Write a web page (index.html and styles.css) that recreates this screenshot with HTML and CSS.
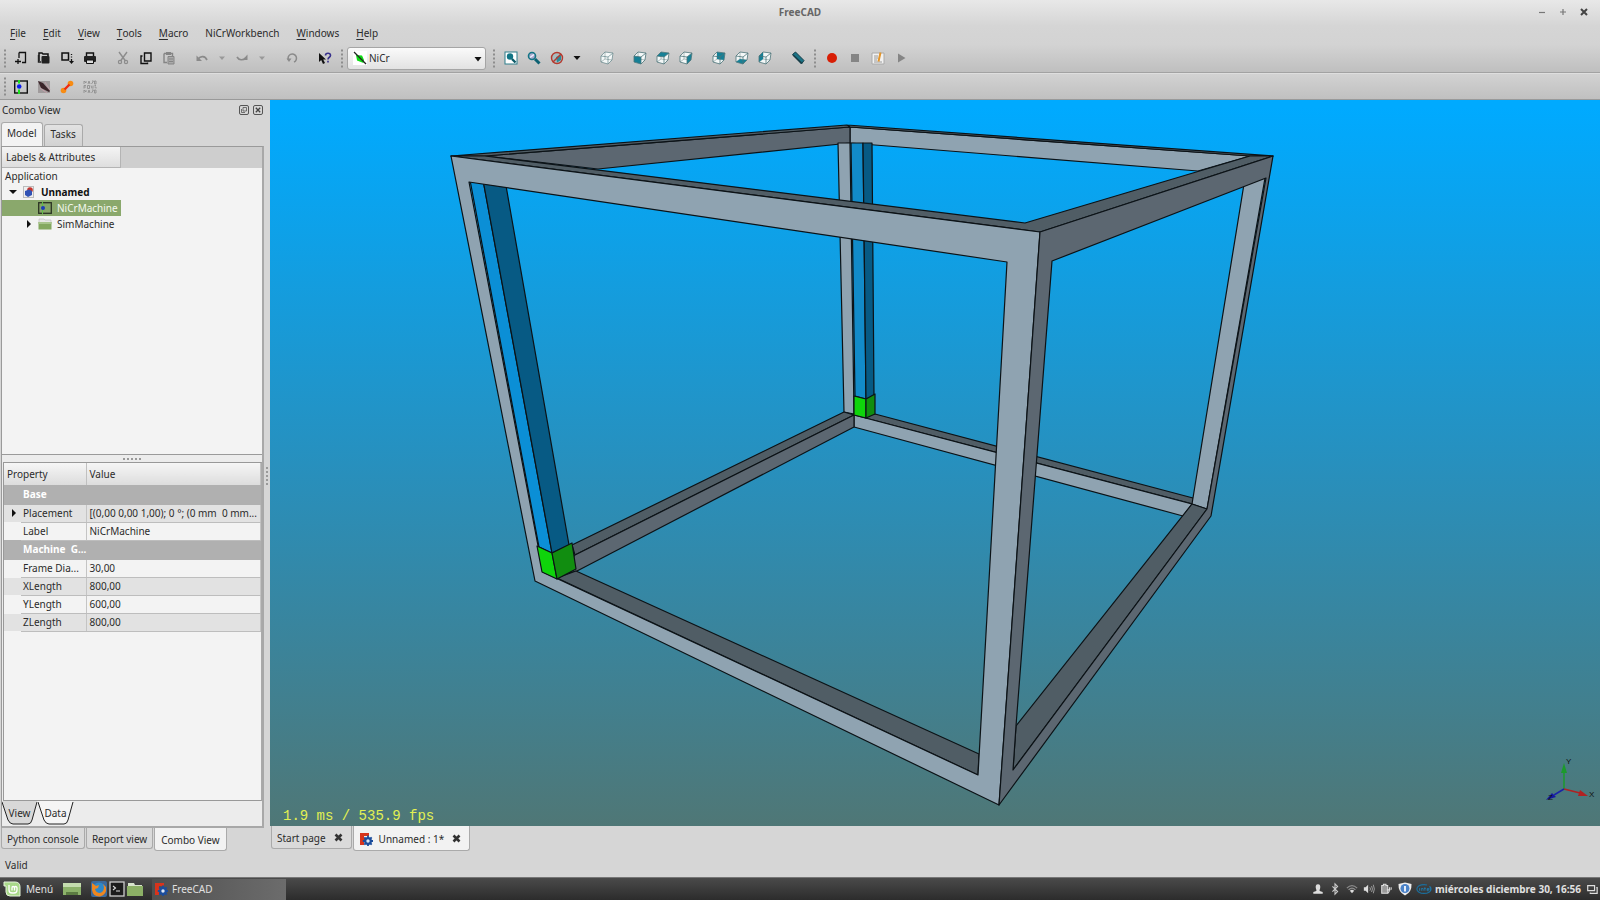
FILE: index.html
```html
<!DOCTYPE html>
<html lang="en">
<head>
<meta charset="utf-8">
<title>FreeCAD</title>
<link rel="stylesheet" href="styles.css">
</head>
<body>
<svg class="defs" aria-hidden="true">
  <symbol id="cube" viewBox="0 0 14 14">
    <path d="M1 5L5 1L13 2L12 9L8 13L1 11Z" fill="#f4f8f8"/>
    <path d="M5 1L5 8L1 11M5 8L12 9" fill="none" stroke="#8fa3a5" stroke-width=".7"/>
  </symbol>
  <symbol id="edges" viewBox="0 0 14 14">
    <path d="M1 5L5 1L13 2L12 9L8 13L1 11ZM1 5L8 6L8 13M8 6L13 2" fill="none" stroke="#4d7378" stroke-width=".8"/>
  </symbol>
  <symbol id="freecad" viewBox="0 0 14 14">
    <path d="M1 1H10V4H5V6H8V8H5V13H1Z" fill="#d8341c"/>
    <path d="M9 3.500V14M3.800 9H14M5.300 5.300L12.700 12.700M12.700 5.300L5.300 12.700" stroke="#1c4d9c" stroke-width="1.800"/>
    <circle cx="9" cy="9" r="2.800" fill="#dfe7f2" stroke="#1c4d9c" stroke-width="2.200"/>
  </symbol>
</svg>

<header class="chrome">
  <div class="titlebar">
    <span></span>
    <h1 class="title">FreeCAD</h1>
    <div class="winbtns">
      <button aria-label="Minimize"><svg width="8" height="8" viewBox="0 0 8 8"><path d="M1 4.5H7" stroke="#777" stroke-width="1.2"/></svg></button>
      <button aria-label="Maximize"><svg width="8" height="8" viewBox="0 0 8 8"><path d="M1 4H7M4 1V7" stroke="#777" stroke-width="1.2"/></svg></button>
      <button aria-label="Close"><svg width="8" height="8" viewBox="0 0 8 8"><path d="M1 1L7 7M7 1L1 7" stroke="#444" stroke-width="2"/></svg></button>
    </div>
  </div>
  <nav class="menubar">
    <button><u>F</u>ile</button><button><u>E</u>dit</button><button><u>V</u>iew</button><button><u>T</u>ools</button><button><u>M</u>acro</button><button>NiCrWorkbench</button><button><u>W</u>indows</button><button><u>H</u>elp</button>
  </nav>
  <div class="toolbar main-tools">
    <i class="grip first"></i>
    <button aria-label="New"><svg viewBox="0 0 14 14"><path d="M5 1.5H11.5V11.5H8M5 1.5V7M4 8V13M1 10.5H7" fill="none" stroke="#111" stroke-width="1.3"/></svg></button>
    <button aria-label="Open"><svg viewBox="0 0 14 14"><path d="M2 10V2H5L6 3H11V5" fill="none" stroke="#111" stroke-width="1.5"/><rect x="4.5" y="5" width="8" height="7.5" rx="1" fill="#222"/><path d="M1.5 4V11H4" stroke="#222" fill="none" stroke-width="1.4"/></svg></button>
    <button aria-label="Save"><svg viewBox="0 0 14 14"><path d="M2 2H8.500V9H2Z" fill="none" stroke="#111" stroke-width="1.500"/><path d="M11.500 3V4M11.500 5.500V6.500M11.500 8V10" stroke="#111" stroke-width="1.300"/><path d="M9 10H14L11.500 13Z" fill="#111"/></svg></button>
    <button aria-label="Print"><svg viewBox="0 0 14 14"><path d="M3.5 5V2H10.5V5" fill="none" stroke="#111" stroke-width="1.4"/><rect x="1" y="5" width="12" height="6" rx="1" fill="#222"/><path d="M3.5 9H10.5V12.5H3.5Z" fill="#ddd" stroke="#111"/></svg></button>
    <i class="sep"></i>
    <button aria-label="Cut" disabled><svg viewBox="0 0 14 14"><path d="M3 1L9.5 10M11 1L4.5 10" stroke="#8c8c8c" stroke-width="1.4"/><circle cx="4" cy="11" r="1.6" fill="none" stroke="#8c8c8c" stroke-width="1.2"/><circle cx="10" cy="11" r="1.6" fill="none" stroke="#8c8c8c" stroke-width="1.2"/></svg></button>
    <button aria-label="Copy"><svg viewBox="0 0 14 14"><path d="M5.5 2H12V10H5.5ZM3.5 5H2V12.5H8.5V11.5" fill="none" stroke="#111" stroke-width="1.4"/></svg></button>
    <button aria-label="Paste" disabled><svg viewBox="0 0 14 14"><path d="M2 2.5H10.5V5M2 2.5V11.5H5" fill="none" stroke="#858585" stroke-width="1.4"/><rect x="4" y="1" width="5" height="3" fill="#858585"/><path d="M6 5.5H12V13H6ZM7 8H11M7 10.500H11" fill="#aaa" stroke="#858585"/></svg></button>
    <i class="sep"></i>
    <button aria-label="Undo" disabled><svg viewBox="0 0 14 14"><path d="M3 8C6 4.500 10 5 12 9" fill="none" stroke="#8a8a8a" stroke-width="1.700"/><path d="M1.500 4.500V10H7Z" fill="#8a8a8a"/></svg></button>
    <button class="drop" aria-label="Undo list" disabled><svg viewBox="0 0 8 8"><path d="M1 2.500H7L4 6Z" fill="#999"/></svg></button>
    <button aria-label="Redo" disabled><svg viewBox="0 0 14 14"><path d="M2 6C4 9.500 8 9.500 11 7" fill="none" stroke="#8a8a8a" stroke-width="1.700"/><path d="M12.500 3.500V9H7.500Z" fill="#8a8a8a"/></svg></button>
    <button class="drop" aria-label="Redo list" disabled><svg viewBox="0 0 8 8"><path d="M1 2.500H7L4 6Z" fill="#999"/></svg></button>
    <i class="sep"></i>
    <button aria-label="Refresh" disabled><svg viewBox="0 0 14 14"><path d="M3.500 9A4.200 4.200 0 1 1 9 11" fill="none" stroke="#8a8a8a" stroke-width="1.500"/><path d="M1.500 7.500H6.500L4 11Z" fill="#8a8a8a"/></svg></button>
    <i class="sep"></i>
    <button aria-label="What's this"><svg viewBox="0 0 14 14"><path d="M1 2L1 11L3.200 9L5 13L7 12L5.200 8.500H8Z" fill="#111"/><path d="M7.500 4.500C7.500 1.500 12.500 1.500 12.500 4.500C12.500 6.500 10 6 10 8.500M10 9.800V11.500" fill="none" stroke="#37308c" stroke-width="1.600"/></svg></button>
    <i class="grip"></i>
    <div class="workbench">
      <svg width="14" height="14" viewBox="0 0 14 14"><rect width="14" height="14" fill="#fff"/><path d="M3 4L9 4.500L11 9L10.500 12L4 9.500Z" fill="#0bdc12"/><path d="M1 1L13 13" stroke="#222" stroke-width="1.300"/></svg>
      <select aria-label="Workbench"><option>NiCr</option></select>
      <svg class="caret" width="8" height="8" viewBox="0 0 8 8"><path d="M.5 2H7.500L4 6.500Z" fill="#111"/></svg>
    </div>
    <i class="grip"></i>
    <button aria-label="Fit all"><svg viewBox="0 0 14 14"><rect x="1" y="1" width="12" height="12" fill="#fff" stroke="#2f7f8c"/><circle cx="6" cy="5.500" r="3.200" fill="#127585"/><path d="M8 8L11.500 11.500" stroke="#0d5a68" stroke-width="2.400"/></svg></button>
    <button aria-label="Fit selection"><svg viewBox="0 0 14 14"><circle cx="5" cy="5" r="3.500" fill="#aac" stroke="#127585" stroke-width="1.600"/><path d="M3 6.500L7 3.500" stroke="#eef" stroke-width="1.500"/><path d="M8 8L12.500 12.500" stroke="#0d6273" stroke-width="3"/></svg></button>
    <button aria-label="Draw style"><svg viewBox="0 0 14 14"><circle cx="7" cy="7" r="5.500" fill="#a9bdc0" stroke="#b5392e" stroke-width="1.400"/><path d="M6 6L11 4V9L7 11.500Z" fill="#2a8b99"/><path d="M11 3L3 11" stroke="#b5392e" stroke-width="1.500"/></svg></button>
    <button class="drop" aria-label="Draw style list"><svg viewBox="0 0 8 8"><path d="M.5 2H7.500L4 6Z" fill="#111"/></svg></button>
    <i class="sep"></i>
    <button aria-label="Axonometric"><svg viewBox="0 0 14 14"><use href="#cube"/><use href="#edges" opacity=".75"/></svg></button>
    <i class="sep"></i>
    <button aria-label="Front"><svg viewBox="0 0 14 14"><use href="#cube"/><path d="M1 5L8 6V13L1 11Z" fill="#168096"/><use href="#edges"/></svg></button>
    <button aria-label="Top"><svg viewBox="0 0 14 14"><use href="#cube"/><path d="M1 5L5 1L13 2L8 6Z" fill="#168096"/><use href="#edges"/></svg></button>
    <button aria-label="Right"><svg viewBox="0 0 14 14"><use href="#cube"/><path d="M8 6L13 2L12 9L8 13Z" fill="#168096"/><use href="#edges"/></svg></button>
    <i class="sep"></i>
    <button aria-label="Rear"><svg viewBox="0 0 14 14"><use href="#cube"/><path d="M5 1L13 2L12 9L5 8Z" fill="#168096"/><use href="#edges"/></svg></button>
    <button aria-label="Bottom"><svg viewBox="0 0 14 14"><use href="#cube"/><path d="M1 11L5 8L12 9L8 13Z" fill="#168096"/><use href="#edges"/></svg></button>
    <button aria-label="Left"><svg viewBox="0 0 14 14"><use href="#cube"/><path d="M1 5L5 1V8L1 11Z" fill="#168096"/><use href="#edges"/></svg></button>
    <i class="sep"></i>
    <button aria-label="Measure"><svg viewBox="0 0 14 14"><path d="M1.500 3.500L4.500 1L13 9.500L10.500 13Z" fill="#1b7386" stroke="#173c46"/><path d="M2 4L10.500 12" stroke="#173c46" stroke-width="1.600"/></svg></button>
    <i class="grip"></i>
    <button aria-label="Record macro"><svg viewBox="0 0 14 14"><circle cx="7" cy="7" r="5" fill="#d81e05"/></svg></button>
    <button aria-label="Stop macro" disabled><svg viewBox="0 0 14 14"><rect x="3" y="3" width="8" height="8" fill="#858585"/></svg></button>
    <button aria-label="Macros"><svg viewBox="0 0 14 14"><path d="M1 2H13V13H1Z" fill="#f1f1f1" stroke="#aaa"/><path d="M3 5H7M3 7H7M3 9H6M3 11H11" stroke="#9a9a9a"/><path d="M9.500 1.500L7.500 10.500" stroke="#e3952a" stroke-width="2"/></svg></button>
    <button aria-label="Run macro" disabled><svg viewBox="0 0 14 14"><path d="M4 2.500L11.500 7L4 11.500Z" fill="#858585"/></svg></button>
  </div>
</header>
<div class="toolbar nicr-tools">
  <i class="grip first"></i>
  <button aria-label="Machine"><svg viewBox="0 0 14 14"><rect x=".7" y="1" width="12.600" height="12" fill="none" stroke="#111" stroke-width="1.400"/><path d="M5 0V3.500M5 9.500V14" stroke="#19e01d" stroke-width="2"/><circle cx="5.200" cy="6.500" r="2.300" fill="#0a1cf0"/></svg></button>
  <button aria-label="Wire"><svg viewBox="0 0 14 14"><rect x="1" y="1" width="12" height="12" fill="#a09b9c"/><path d="M1 1L6 3L13 11L12 12L4 8Z" fill="#3b2429"/><path d="M3 8L10 13M8 2L13 10" stroke="#c4a0a9"/></svg></button>
  <button aria-label="Path"><svg viewBox="0 0 14 14"><circle cx="3.500" cy="10.500" r="2.800" fill="#f78c14"/><circle cx="10.500" cy="3.500" r="2.800" fill="#f78c14"/><path d="M4.500 9.500L9.500 4.500" stroke="#ee2b12" stroke-width="2.400"/></svg></button>
  <button aria-label="Code" disabled><svg viewBox="0 0 14 14"><g fill="none" stroke="#909090" stroke-width=".9"><path d="M1 4V1L3 3V1M5 4L6 1L7 4M9 1H10.500L8.500 4M11.500 1V4H13V1Z"/><path d="M1 8.500V5.500H3M1 7H3M4.500 5.500H6.500V8.500H4.500ZM8 5.500L9 8.500M10 5.500V8.500M11.500 5.500H13M11.500 7H13V8.500"/><path d="M1 13V10L3 12V10M5 13L6 10L7 13M9 10H10.500L8.500 13M11.500 10V13H13V10Z"/></g></svg></button>
</div>

<main class="workspace">
  <aside class="dock">
    <div class="dock-title">
      <h2>Combo View</h2>
      <button aria-label="Float"><svg width="10" height="10" viewBox="0 0 10 10"><rect x=".5" y=".5" width="9" height="9" rx="1.500" fill="none" stroke="#555"/><path d="M4 2.500H7.500V6H4ZM2.500 4V7.500H6" fill="none" stroke="#555" stroke-width=".8"/></svg></button>
      <button aria-label="Close"><svg width="10" height="10" viewBox="0 0 10 10"><rect x=".5" y=".5" width="9" height="9" rx="1.500" fill="none" stroke="#555"/><path d="M2.800 2.800L7.200 7.200M7.200 2.800L2.800 7.200" stroke="#444" stroke-width="1.300"/></svg></button>
    </div>
    <div class="tabs-top"><button class="on">Model</button><button>Tasks</button></div>
    <div class="dock-body">
      <section class="tree">
        <div class="tree-head"><span>Labels &amp; Attributes</span></div>
        <ul>
          <li class="row root">Application</li>
          <li class="row doc"><svg width="8" height="8" viewBox="0 0 8 8"><path d="M0 2H8L4 6Z" fill="#111"/></svg><svg width="12" height="12" viewBox="0 0 12 12"><rect x=".5" y=".5" width="10" height="11" fill="#eee" stroke="#bbb"/><circle cx="7" cy="4" r="2.800" fill="#c6342c"/><path d="M2 5L6 3.500L9 5V9L5 11L2 9Z" fill="#3152b4"/></svg><b>Unnamed</b></li>
          <li class="row item selected"><svg width="14" height="12" viewBox="0 0 14 12"><rect x=".7" y=".7" width="12.600" height="10.600" fill="#86a468" stroke="#2b3324" stroke-width="1.300"/><path d="M4.500 0V12" stroke="#5fbf44"/><circle cx="5" cy="6" r="2" fill="#1c3cb8"/></svg><span>NiCrMachine</span></li>
          <li class="row item"><svg class="twist" width="8" height="8" viewBox="0 0 8 8"><path d="M2 0V8L6 4Z" fill="#111"/></svg><svg width="14" height="12" viewBox="0 0 14 12"><path d="M1 1H6L7 2H13V5H1Z" fill="#e8e8e8" stroke="#bbb" stroke-width=".6"/><rect x=".5" y="4" width="13" height="7.500" fill="#84a860"/><path d="M.5 4H13.500V6H.5Z" fill="#a8c48c"/></svg><span>SimMachine</span></li>
        </ul>
      </section>
      <div class="splitter"></div>
      <section class="props">
        <table>
          <colgroup><col class="c-arrow"><col class="c-name"><col></colgroup>
          <thead><tr><th colspan="2">Property</th><th>Value</th></tr></thead>
          <tbody>
            <tr class="cat"><td></td><td>Base</td><td></td></tr>
            <tr class="alt"><td class="arrow"><svg width="6" height="8" viewBox="0 0 6 8"><path d="M1 0V8L5 4Z" fill="#111"/></svg></td><td>Placement</td><td>[(0,00 0,00 1,00); 0 °; (0 mm&nbsp; 0 mm...</td></tr>
            <tr><td></td><td>Label</td><td>NiCrMachine</td></tr>
            <tr class="cat"><td></td><td>Machine&nbsp; G...</td><td></td></tr>
            <tr><td></td><td>Frame Dia...</td><td>30,00</td></tr>
            <tr class="alt"><td></td><td>XLength</td><td>800,00</td></tr>
            <tr><td></td><td>YLength</td><td>600,00</td></tr>
            <tr class="alt"><td></td><td>ZLength</td><td>800,00</td></tr>
          </tbody>
        </table>
      </section>
      <div class="tabs-slant">
        <button><svg viewBox="0 0 36 24"><path d="M0 0L6 19Q8 23 11 23H26Q29 23 30 19L35 0Z" fill="#d8d8d8"/><path d="M0 1L6 19Q8 23 11 23H26Q29 23 30 19L35 1" fill="none" stroke="#222"/></svg><span>View</span></button>
        <button><svg viewBox="0 0 36 24"><path d="M0 0L6 19Q8 23 11 23H26Q29 23 30 19L35 0Z" fill="#f5f5f5"/><path d="M0 1L6 19Q8 23 11 23H26Q29 23 30 19L35 1" fill="none" stroke="#222"/></svg><span>Data</span></button>
      </div>
    </div>
    <div class="tabs-bottom"><button>Python console</button><button>Report view</button><button class="on">Combo View</button></div>
  </aside>
  <div class="vsplit"></div>
  <section class="mdi">
    <div class="viewport">
      <svg class="scene" viewBox="270 100 1330 726" preserveAspectRatio="xMidYMid meet" role="img" aria-label="Machine frame">
        <g stroke="#0c1216" stroke-width="1.200" stroke-linejoin="round">
          <path class="light" d="M850 127L1250 156L1198 171L850 143Z"/>
          <path class="side" d="M485 156L850 127V143L598 169Z"/>
          <path class="top" d="M451 156L847 125L850 127L485 156ZM847 125L1273 156H1250L850 127Z"/>
          <path class="light" d="M838 143H850L854 414L844 412Z"/>
          <path class="rear" d="M851 143H863L866 399L855 396Z"/>
          <path class="postd" d="M863 143H872L874 396L866 399Z"/>
          <path class="top" d="M875 414L1193 498V504L854 415Z"/>
          <path class="light" d="M854 415L1192 504L1183 516L854 427Z"/>
          <path class="top" d="M572 545L844 412L854 415L575 555Z"/>
          <path class="side" d="M575 555L854 415V427L577 571L560 575Z"/>
          <path class="top" d="M557 578L576 571L979 754L978 775Z"/>
          <path class="light" d="M1244 184L1265 178L1207 509L1192 504Z"/>
          <path class="top" d="M1016 726L1192 504L1207 509L1013 770Z"/>
          <path class="post" d="M470 180L483 180L552 553L539 547Z"/>
          <path class="postd" d="M483 180L505 180L569 545L552 553Z"/>
          <path class="green" d="M854 396L866 399V418L854 415Z"/>
          <path class="greend" d="M866 399L875 394L875 414L866 418Z"/>
          <path class="top" d="M451 156H485L1025 223L1250 156H1273L1040 232Z"/>
          <path class="light" fill-rule="evenodd" d="M451 156L1040 232L999 805L535 581ZM469 182L1007 262L978 775L543 572Z"/>
          <path class="side" fill-rule="evenodd" d="M1040 232L1273 156L1211 516L999 805ZM1052 261L1266 178L1207 509L1013 770L1016 726Z"/>
          <path class="green" d="M537 546L552 553L557 579L542 572Z"/>
          <path class="greend" d="M552 553L572 543L576 569L557 579Z"/>
        </g>
      </svg>
      <span class="fps">1.9 ms / 535.9 fps</span>
      <svg class="axes" width="52" height="48" viewBox="0 0 52 48">
        <path d="M20 32V10" stroke="#1c9a2c" stroke-width="1.500"/><path d="M20 6L23 16H17Z" fill="#1c9a2c"/>
        <path d="M20 32L36 36" stroke="#b02222" stroke-width="1.500"/><path d="M44 39L34 39L36 33Z" fill="#b02222"/>
        <path d="M20 32L10 38" stroke="#1a22a8" stroke-width="1.500"/><path d="M2 43L8 36L12 40Z" fill="#1418a0"/>
        <text x="22" y="7">Y</text><text x="45" y="40">X</text><text x="4" y="43">Z</text>
      </svg>
    </div>
    <div class="tabs-mdi">
      <button>Start page <svg width="9" height="9" viewBox="0 0 9 9"><path d="M1.500 1.500L7.500 7.500M7.500 1.500L1.500 7.500" stroke="#333" stroke-width="2.600"/></svg></button>
      <button class="on"><svg class="fc" width="14" height="14"><use href="#freecad"/></svg>Unnamed : 1* <svg width="9" height="9" viewBox="0 0 9 9"><path d="M1.500 1.500L7.500 7.500M7.500 1.500L1.500 7.500" stroke="#333" stroke-width="2.600"/></svg></button>
    </div>
  </section>
</main>
<div class="status">Valid</div>
<footer class="taskbar">
  <button class="start"><svg width="18" height="16" viewBox="0 0 18 16"><path d="M1 1H12Q17 1 17 6V15H7Q3 15 3 11V5H1Z" fill="#a9d98a" stroke="#e6f3dc"/><path d="M6 4V9Q6 12 9 12H11Q14 12 14 9V7Q14 5.500 12.500 5.500Q11.500 5.500 11.500 7V9.500M11.500 7Q11.500 5.500 10 5.500Q9 5.500 9 7V9.500" fill="none" stroke="#fff" stroke-width="1.300"/></svg>Menú</button>
  <button class="desk" aria-label="Show desktop"><svg width="18" height="16" viewBox="0 0 18 16"><rect x="0" y="2" width="18" height="12" fill="#8cb26a"/><rect x="0" y="2" width="18" height="4" fill="#c4dcae"/><path d="M3 14V11H15V14" fill="#5b7b42"/></svg></button>
  <div class="launch">
    <button aria-label="Firefox"><svg width="16" height="16" viewBox="0 0 16 16"><rect width="16" height="16" rx="2" fill="#3d6a9c"/><circle cx="8" cy="8" r="6.500" fill="#2f88c8"/><path d="M1 2L5 5L8 4L7 7L4 8Q5 12 9 12Q13 11 13 6L12 3L15 6Q16 14 9 15.500Q2 16 1 9Z" fill="#ef8720"/></svg></button>
    <button aria-label="Terminal"><svg width="16" height="16" viewBox="0 0 16 16"><rect x="1" y="1" width="14" height="14" fill="#1c1c1c" stroke="#ccc" stroke-width="1.300"/><path d="M4 5L6.500 7L4 9M7 10H11" fill="none" stroke="#ddd" stroke-width="1.100"/></svg></button>
    <button aria-label="Files"><svg width="16" height="16" viewBox="0 0 16 16"><path d="M1 2H7L8 4H15V7H1Z" fill="#d8e4cc"/><rect x="0" y="5" width="16" height="10" fill="#8cb066"/></svg></button>
  </div>
  <button class="task"><svg width="14" height="14"><use href="#freecad"/></svg>FreeCAD</button>
  <div class="tray">
    <svg viewBox="0 0 14 14"><path d="M7 1.500C9.500 1.500 10 4 9.500 6Q9 8 8.500 8.500Q9 10 12.500 10.500V12.500H1.500V10.500Q5 10 5.500 8.500Q5 8 4.500 6C4 4 4.500 1.500 7 1.500Z" fill="#ddd"/></svg>
    <svg viewBox="0 0 14 14"><path d="M4 4L10 10L7 13V1L10 4L4 10" fill="none" stroke="#ccc" stroke-width="1.300"/></svg>
    <svg viewBox="0 0 14 14"><path d="M1 6Q7 0 13 6M3 8Q7 4 11 8" fill="none" stroke="#8c8c8c" stroke-width="1.500"/><path d="M4.500 9Q7 6.500 9.500 9L7 12Z" fill="#ddd"/></svg>
    <svg viewBox="0 0 14 14"><path d="M1 5H3L6 2V12L3 9H1Z" fill="#ddd"/><path d="M8 5Q9.500 7 8 9M10 3.500Q12 7 10 10.500M12 2Q14.500 7 12 12" fill="none" stroke="#aaa"/></svg>
    <svg viewBox="0 0 14 14"><path d="M2 3H4V1.500H7V3H9V12H2Z" fill="#999" stroke="#ddd" stroke-width="1.200"/><path d="M8 8H12M11 5V8Q11 11 9 12M13 5V8" fill="none" stroke="#ddd" stroke-width="1.300"/></svg>
    <svg class="wide" viewBox="0 0 14 14"><path d="M7 .5L13.500 2Q14 10 7 13.500Q0 10 .5 2Z" fill="#eee"/><circle cx="7" cy="6.500" r="4.500" fill="#4a82c8"/><path d="M7 4V9.500" stroke="#fff" stroke-width="1.700"/></svg>
    <svg class="wide" viewBox="0 0 18 14"><ellipse cx="9" cy="7" rx="8" ry="5" fill="none" stroke="#1b6f9e" stroke-width="1.300" stroke-dasharray="34 3"/><path d="M4 6V9M6 9V6.500H8V9M10 5V9M9 6.500H11M12.500 7.700H14.500V6.500H12.500V9H14.500M16 4.500V9" fill="none" stroke="#1f80b4" stroke-width=".9"/></svg>
    <time>miércoles diciembre 30, 16:56</time>
    <svg viewBox="0 0 14 14"><path d="M2 3H10V9H2ZM12 5.500H13V12H5V11" fill="none" stroke="#ddd" stroke-width="1.400"/></svg>
  </div>
</footer>
</body>
</html>
```

FILE: styles.css
```css
* { box-sizing: border-box; }
body {
  margin: 0;
  height: 100vh;
  display: flex;
  flex-direction: column;
  overflow: hidden;
  background: #d6d6d6;
  color: #2b2b2b;
  font: 10px/16px "Noto Sans", "Open Sans", sans-serif;
}
button {
  font: inherit;
  color: inherit;
  border: 0;
  background: none;
  padding: 0;
  display: flex;
  align-items: center;
}
h1, h2, ul { margin: 0; padding: 0; font-size: inherit; }
ul { list-style: none; }
svg { flex: none; display: block; }
.defs { position: absolute; width: 0; height: 0; }

.chrome {
  background: linear-gradient(#e8e8e8, #d5d5d5 36%, #d3d3d3 62%, #bfbfbf);
  border-bottom: 1px solid #a2a2a2;
}
.titlebar {
  display: grid;
  grid-template-columns: 1fr auto 1fr;
  align-items: center;
  height: 24px;
}
.title { color: #666; font-weight: 700; }
.winbtns { display: flex; justify-content: flex-end; gap: 13px; padding-right: 12px; }
.menubar { display: flex; gap: 1px; height: 20px; padding: 0 0 2px 2px; }
.menubar button { padding: 0 8px; }
.menubar u { text-underline-offset: 2px; }

.toolbar { display: flex; align-items: center; }
.toolbar button { width: 23px; height: 24px; justify-content: center; flex: none; }
.toolbar button svg { width: 14px; height: 14px; }
.toolbar .drop { width: 17px; }
.toolbar .drop svg { width: 8px; height: 8px; }
.main-tools { height: 28px; }
.nicr-tools {
  height: 27px;
  background: linear-gradient(#d2d2d2, #c0c0c0);
  border-top: 1px solid #dedede;
  border-bottom: 1px solid #999;
}
.sep { width: 10px; flex: none; }
.grip {
  width: 11px;
  height: 21px;
  flex: none;
  background: radial-gradient(circle, #8d8d8d 1px, transparent 1px) center / 4px 4px repeat-y;
}
.grip.first { width: 9px; }
.workbench { position: relative; width: 141px; padding-right: 2px; }
.workbench select {
  display: block;
  width: 100%;
  height: 23px;
  appearance: none;
  border: 1px solid #a5a5a5;
  border-radius: 3px;
  background: linear-gradient(#fafafa, #e2e2e2);
  font: inherit;
  color: inherit;
  padding: 0 20px 0 21px;
}
.workbench svg { position: absolute; left: 6px; top: 4px; pointer-events: none; }
.workbench .caret { left: auto; right: 6px; top: 8px; }

.workspace { flex: 1; display: flex; min-height: 0; }
.dock { width: 264px; display: flex; flex-direction: column; flex: none; }
.dock-title { display: flex; align-items: center; gap: 4px; height: 22px; padding: 0 1px 2px 2px; }
.dock-title h2 { flex: 1; font-weight: 400; }
.tabs-top { display: flex; align-items: flex-end; gap: 1px; height: 24px; padding-left: 1px; }
.tabs-top button {
  height: 22px;
  padding: 0 6px 3px;
  border: 1px solid #aaa;
  border-bottom: 0;
  border-radius: 3px 3px 0 0;
  background: linear-gradient(#e2e2e2, #d2d2d2);
}
.tabs-top .on { height: 24px; padding: 0 5px 3px; background: #f3f3f3; }
.dock-body {
  flex: 1;
  min-height: 0;
  display: flex;
  flex-direction: column;
  margin-left: 1px;
  background: #ececec;
  border: 1px solid #9a9a9a;
  border-right: 2px solid #a8a8a8;
  border-bottom: 2px solid #a8a8a8;
}
.tree { flex: 310; background: #f3f3f3; border-bottom: 1px solid #9a9a9a; min-height: 0; }
.tree-head { background: #cecece; height: 21px; }
.tree-head span {
  display: block;
  width: 119px;
  height: 21px;
  padding: 2px 4px;
  background: linear-gradient(#f4f4f4, #dedede);
  border-right: 1px solid #b4b4b4;
  border-bottom: 1px solid #b4b4b4;
}
.row { display: flex; align-items: center; height: 16px; width: 119px; }
.root { padding-left: 3px; }
.doc { padding-left: 7px; gap: 6px; color: #111; }
.item { padding-left: 36px; gap: 5px; position: relative; }
.item.selected { background: #8aa86c; color: #f4f8ef; }
.twist { position: absolute; left: 23px; top: 4px; }
.splitter {
  width: 20px;
  height: 7px;
  align-self: center;
  background: radial-gradient(circle, #999 1px, transparent 1px) center / 4px 4px repeat-x;
}
.props { flex: 340; margin: 0 0 0 1px; background: #f3f3f3; border: 1px solid #999; border-right-color: #aaa; min-height: 0; }
.props table { width: 100%; border-collapse: collapse; table-layout: fixed; }
.c-arrow { width: 17px; }
.c-name { width: 65px; }
.props th {
  height: 22px;
  text-align: left;
  font-weight: 400;
  padding: 0 3px;
  background: linear-gradient(#f6f6f6, #dcdcdc);
  border-right: 1px solid #c0c0c0;
}
.props td {
  height: 18px;
  padding: 0 3px;
  line-height: 17px;
  white-space: nowrap;
  overflow: hidden;
  border-bottom: 1px solid #bdbdbd;
  border-right: 1px solid #c4c4c4;
}
.props td:first-child { border-right: 0; border-bottom-color: transparent; }
.props td:nth-child(2) { padding: 0 0 0 2px; }
.props .arrow { padding-left: 7px; }
.props .alt { background: #e2e2e2; }
.props .cat { background: #b0b0b0; color: #fff; font-weight: 700; }
.props .cat td { height: 19px; border-color: #b0b0b0; overflow: visible; }
.tabs-slant { display: flex; height: 25px; gap: 1px; }
.tabs-slant button { position: relative; width: 35px; height: 24px; justify-content: center; }
.tabs-slant svg { position: absolute; left: 0; top: 0; width: 36px; height: 24px; }
.tabs-slant span { position: relative; }
.tabs-bottom, .tabs-mdi { display: flex; align-items: flex-start; gap: 1px; height: 24px; padding-left: 1px; }
.tabs-bottom button, .tabs-mdi button {
  height: 21px;
  padding: 1px 5px 0;
  border: 1px solid #aaa;
  border-top: 0;
  border-radius: 0 0 3px 3px;
  background: #dadada;
}
.tabs-bottom .on, .tabs-mdi .on { height: 23px; background: #f2f2f2; }
.tabs-bottom .on { padding: 1px 6px 0; }

.vsplit {
  width: 6px;
  height: 20px;
  margin-top: 366px;
  flex: none;
  background: radial-gradient(circle, #999 1px, transparent 1px) center / 4px 4px repeat-y;
}
.mdi { flex: 1; display: flex; flex-direction: column; min-width: 0; }
.viewport { flex: 1; min-height: 0; position: relative; background: linear-gradient(#00aaff 1%, #2790be 50%, #4f7776); }
.scene { width: 100%; height: 100%; }
.light { fill: #8fa3b1; }
.side { fill: #5c6771; }
.top { fill: #505d65; }
.post { fill: #0b8fd6; }
.rear { fill: #128bc9; }
.postd { fill: #075a84; }
.green { fill: #0fd40b; }
.greend { fill: #118d10; }
.fps {
  position: absolute;
  left: 13px;
  bottom: 2px;
  color: #e2f052;
  font: 14px/16px "Liberation Mono", monospace;
}
.axes { position: absolute; right: 4px; bottom: 21px; font: 8px "Liberation Sans", sans-serif; fill: #111; }
.tabs-mdi { height: 26px; gap: 1px; }
.tabs-mdi button { height: 23px; gap: 8px; padding: 1px 8px 0 5px; }
.tabs-mdi .on { height: 25px; }
.tabs-mdi .fc { margin-right: -2px; }

.status { height: 25px; padding: 5px; flex: none; }
.taskbar {
  display: flex;
  align-items: center;
  height: 23px;
  flex: none;
  padding: 0 2px 0 3px;
  color: #e0e0e0;
  background: linear-gradient(#4a4a4a, #2c2c2c);
  border-top: 1px solid #777;
}
.start { gap: 5px; }
.desk { margin-left: 10px; }
.launch { display: flex; gap: 2px; margin: 0 9px 0 10px; }
.task {
  width: 134px;
  height: 21px;
  gap: 4px;
  padding-left: 2px;
  background: linear-gradient(90deg, #505050, #6c6c6c);
}
.tray { display: flex; align-items: center; gap: 5px; margin-left: auto; }
.tray svg { width: 12px; height: 14px; }
.tray .wide { width: 16px; margin-right: -2px; }
.tray time { font-weight: 700; }
```
